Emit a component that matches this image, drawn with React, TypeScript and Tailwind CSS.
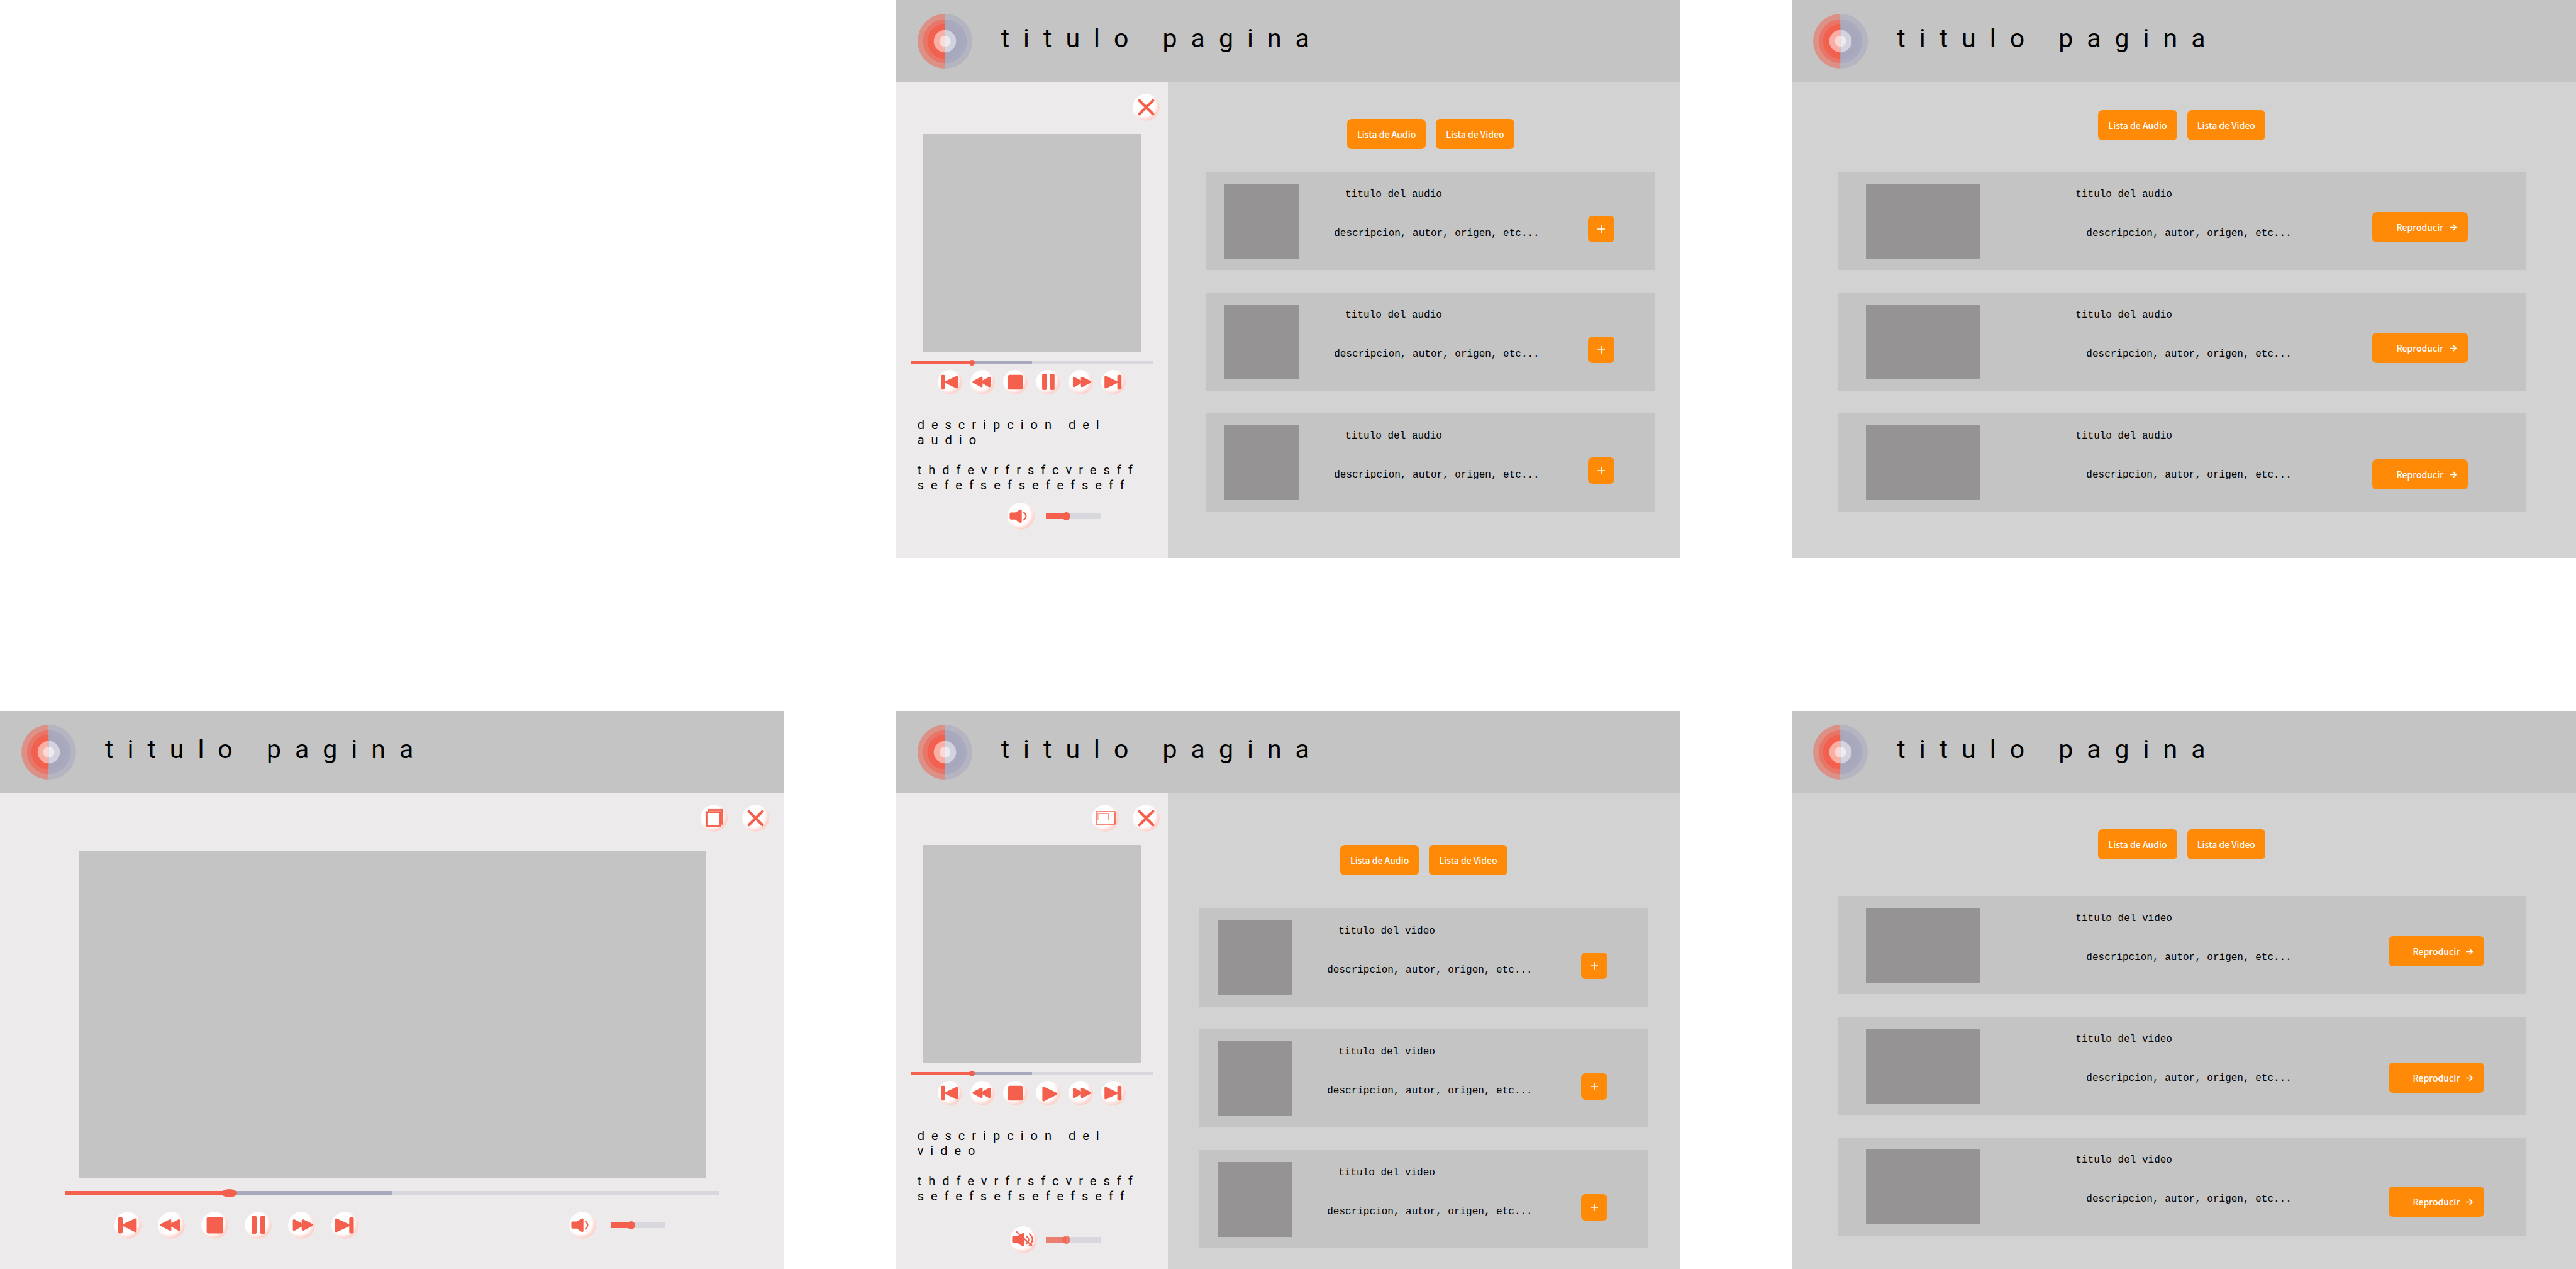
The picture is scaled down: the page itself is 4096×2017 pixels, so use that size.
import type { ReactNode } from "react";

const RED = "#f4604d";

/* ---------- Icons ---------- */

function Glyph({ size, children }: { size: number; children: ReactNode }) {
  return (
    <svg viewBox={`0 0 ${size} ${size}`} className="block size-full" fill="none" aria-hidden="true">
      {children}
    </svg>
  );
}

const solid = { fill: RED, stroke: RED, strokeWidth: 4, strokeLinejoin: "round" as const };

const PreviousIcon = () => (
  <Glyph size={45}>
    <rect x="6" y="9" width="7.6" height="27" rx="2.6" fill={RED} />
    <path d="M15.4 22.3 35 13v19z" {...solid} />
  </Glyph>
);

const RewindIcon = () => (
  <Glyph size={45}>
    <path d="M5.8 22 20.4 14.6v15z" {...solid} />
    <path d="M21.5 22 35 14.6v15z" {...solid} />
  </Glyph>
);

const StopIcon = () => (
  <Glyph size={45}>
    <rect x="9" y="9" width="27" height="27" rx="3" fill={RED} />
  </Glyph>
);

const PauseIcon = () => (
  <Glyph size={45}>
    <rect x="11.6" y="7" width="8.4" height="30" rx="2.6" fill={RED} />
    <rect x="26" y="7" width="8.4" height="30" rx="2.6" fill={RED} />
  </Glyph>
);

const PlayIcon = () => (
  <Glyph size={45}>
    <path d="M14 12.4v23.2L37.6 23.6z" {...solid} />
  </Glyph>
);

const ForwardIcon = () => (
  <Glyph size={45}>
    <path d="M10 14.6v15L23.6 22z" {...solid} />
    <path d="M24.7 14.6v15L39.6 22z" {...solid} />
  </Glyph>
);

const NextIcon = () => (
  <Glyph size={45}>
    <rect x="29.6" y="9" width="7.6" height="27" rx="2.6" fill={RED} />
    <path d="M8 13v19l20.4-9.5z" {...solid} />
  </Glyph>
);

const SPEAKER = "M6 20h8.6L24.4 14.4v21L14.6 29H6z";

const VolumeIcon = () => (
  <Glyph size={50}>
    <path d={SPEAKER} {...solid} />
    <path d="M30 17.8q8.6 6.6 0 14" stroke={RED} strokeWidth="2.4" strokeLinecap="round" />
  </Glyph>
);

const MutedIcon = () => (
  <Glyph size={50}>
    <path d={SPEAKER} {...solid} />
    <path
      d="M30 18.2q8.8 6.4 0 14M35.8 14.4q11.4 9.4 0 21.4M12.4 10.6 40 35.6"
      stroke={RED}
      strokeWidth="2.6"
      strokeLinecap="round"
    />
  </Glyph>
);

const CloseIcon = () => (
  <Glyph size={50}>
    <path d="M12.4 12.4l25.2 25.2M37.6 12.4 12.4 37.6" stroke={RED} strokeWidth="5" strokeLinecap="round" />
  </Glyph>
);

const MiniScreenIcon = () => (
  <Glyph size={50}>
    <rect x="8" y="13" width="35" height="23" rx="0.6" stroke={RED} strokeWidth="2" />
    <rect x="11.5" y="16.5" width="19" height="12" stroke={RED} />
  </Glyph>
);

const WindowsIcon = () => (
  <Glyph size={50}>
    <rect x="15" y="9.8" width="25" height="25.4" fill="#f9aca2" stroke="#f6796a" strokeWidth="3.6" />
    <rect x="15" y="9.8" width="25" height="25.4" stroke={RED} strokeWidth="2" />
    <rect x="11" y="13.8" width="25.2" height="25.2" fill="#fefefe" stroke="#f6796a" strokeWidth="3.6" />
    <rect x="11" y="13.8" width="25.2" height="25.2" stroke={RED} strokeWidth="2" />
  </Glyph>
);

const ArrowIcon = () => (
  <svg viewBox="0 0 12 12" className="size-[11px]" fill="none" aria-hidden="true">
    <path d="M0 6h11M6 .8 11 6 6 11.2" stroke="#fff" strokeWidth="1.9" />
  </svg>
);

const PlusIcon = () => (
  <svg viewBox="0 0 12 12" className="size-3" fill="none" aria-hidden="true">
    <path d="M0 6h12M6 0v12" stroke="#fff" strokeWidth="1.7" />
  </svg>
);

function Logo() {
  const rings = [
    { r: 50, left: "#dc9187", right: "#b5b5c1" },
    { r: 40, left: "#e87568", right: "#a9a9bf" },
    { r: 32, left: "#f0624f", right: "#a8a8bd" },
    { r: 26, left: "#f4604d", right: "#a7a7be" },
    { r: 20.5, left: "#faafa6", right: "#d3d3df" },
    { r: 10.2, left: "#fcd9d4", right: "#ebebf0" },
  ];
  return (
    <svg viewBox="0 0 100 100" className="size-[87px] shrink-0" role="img" aria-label="Logo">
      {rings.map(({ r, left, right }) => (
        <g key={r}>
          <path d={`M50 ${50 - r}a${r} ${r} 0 0 0 0 ${2 * r}z`} fill={left} />
          <path d={`M50 ${50 - r}a${r} ${r} 0 0 1 0 ${2 * r}z`} fill={right} />
        </g>
      ))}
    </svg>
  );
}

/* ---------- Controls ---------- */

function RoundButton({ label, small, children }: { label: string; small?: boolean; children: ReactNode }) {
  return (
    <button
      type="button"
      aria-label={label}
      className={`shrink-0 rounded-full bg-[#fefefe] shadow-[inset_-4px_-4px_4px_#fbd3cd] ${
        small ? "size-[39px]" : "size-[43px]"
      }`}
    >
      {children}
    </button>
  );
}

function Transport({ playing, small }: { playing: boolean; small?: boolean }) {
  return (
    <div className={`flex ${small ? "gap-[13px]" : "gap-[26px]"}`}>
      <RoundButton label="Anterior" small={small}><PreviousIcon /></RoundButton>
      <RoundButton label="Retroceder" small={small}><RewindIcon /></RoundButton>
      <RoundButton label="Detener" small={small}><StopIcon /></RoundButton>
      {playing ? (
        <RoundButton label="Pausar" small={small}><PauseIcon /></RoundButton>
      ) : (
        <RoundButton label="Continuar" small={small}><PlayIcon /></RoundButton>
      )}
      <RoundButton label="Adelantar" small={small}><ForwardIcon /></RoundButton>
      <RoundButton label="Siguiente" small={small}><NextIcon /></RoundButton>
    </div>
  );
}

const SLIDER =
  "block appearance-none bg-transparent [&::-webkit-slider-thumb]:appearance-none [&::-webkit-slider-thumb]:rounded-[50%] [&::-webkit-slider-thumb]:bg-[#f4604d]";

const PROGRESS_TRACK =
  "w-full [&::-webkit-slider-runnable-track]:bg-[linear-gradient(to_right,#f4604d_25%,#a8a8bf_25%,#a8a8bf_50%,#d8d7de_50%)]";

function Progress({ wide }: { wide?: boolean }) {
  return (
    <input
      type="range"
      aria-label="Progreso"
      step={0.1}
      defaultValue={24.5}
      className={`${SLIDER} ${PROGRESS_TRACK} ${
        wide
          ? "h-[13px] [&::-webkit-slider-runnable-track]:h-[7px] [&::-webkit-slider-thumb]:mt-[-3px] [&::-webkit-slider-thumb]:h-[13px] [&::-webkit-slider-thumb]:w-[25px]"
          : "h-[9px] [&::-webkit-slider-runnable-track]:h-[5px] [&::-webkit-slider-thumb]:mt-[-2px] [&::-webkit-slider-thumb]:size-[9px]"
      }`}
    />
  );
}

function VolumeSlider({ muted }: { muted?: boolean }) {
  return (
    <input
      type="range"
      aria-label="Volumen"
      defaultValue={35}
      className={`${SLIDER} h-[13px] w-[87px] [&::-webkit-slider-runnable-track]:h-[9px] [&::-webkit-slider-thumb]:mt-[-2px] [&::-webkit-slider-thumb]:size-[13px] ${
        muted
          ? "[&::-webkit-slider-runnable-track]:bg-[linear-gradient(to_right,#eb7e71_37%,#d8d7de_37%)] [&::-webkit-slider-thumb]:opacity-80"
          : "[&::-webkit-slider-runnable-track]:bg-[linear-gradient(to_right,#f4604d_37%,#d8d7de_37%)]"
      }`}
    />
  );
}

/* ---------- Page parts ---------- */

function Screen({ className = "", children }: { className?: string; children: ReactNode }) {
  return (
    <section className={`flex flex-col bg-[#d2d2d2] ${className}`}>
      <header className="flex h-[130px] shrink-0 items-center bg-[#c4c4c4] pl-[34px]">
        <Logo />
        <h1 className="ml-[46px] pb-2 font-[Roboto,sans-serif] text-[41px] leading-[48px] tracking-[22px] text-black">
          titulo pagina
        </h1>
      </header>
      <div className="flex flex-1">{children}</div>
    </section>
  );
}

function PlayerPanel({ kind }: { kind: "audio" | "video" }) {
  const video = kind === "video";
  return (
    <aside className="w-[34.7%] shrink-0 bg-[#eceaeb] pt-[19px]">
      <div className="flex justify-end gap-[22px] pr-[13px]">
        {video && <RoundButton label="Pantalla completa"><MiniScreenIcon /></RoundButton>}
        <RoundButton label="Cerrar"><CloseIcon /></RoundButton>
      </div>
      <div className="mt-[21px] px-[43px]">
        <div className="aspect-square bg-[#c4c4c4]" />
      </div>
      <div className="mt-3 px-6">
        <Progress />
      </div>
      <div className="mt-[7px] flex justify-center">
        <Transport playing={!video} small />
      </div>
      <div className="mt-9 pl-[34px] font-[Roboto,sans-serif] text-xl leading-6 tracking-[11px] text-black">
        <p>
          descripcion del
          <br />
          {kind}
        </p>
        <p className="mt-6">
          thdfevrfrsfcvresff
          <br />
          sefefsefsefefseff
        </p>
      </div>
      {video ? (
        <div className="mt-9 flex items-center gap-[14px] pl-[181px]">
          <RoundButton label="Activar sonido"><MutedIcon /></RoundButton>
          <VolumeSlider muted />
        </div>
      ) : (
        <div className="mt-4 flex items-center gap-[18px] pl-[177px]">
          <RoundButton label="Silenciar"><VolumeIcon /></RoundButton>
          <VolumeSlider />
        </div>
      )}
    </aside>
  );
}

const TAB =
  "h-12 rounded-[7px] bg-[#ff8a08] px-4 font-['Noto_Sans_CJK_SC',sans-serif] text-sm font-medium text-white";

function ListTabs() {
  return (
    <nav className="flex justify-center gap-4">
      <button type="button" className={TAB}>Lista de Audio</button>
      <button type="button" className={TAB}>Lista de Video</button>
    </nav>
  );
}

function CompactCard({ kind }: { kind: string }) {
  return (
    <li className="flex h-[156px] items-start bg-[#c4c4c4] pt-[19px] pr-[65px] pl-[30px]">
      <div className="size-[119px] shrink-0 bg-[#969394]" />
      <div className="ml-[55px] pt-[7px] font-['Liberation_Mono',monospace] text-base leading-5 text-black">
        <h2 className="pl-[18px]">titulo del {kind}</h2>
        <p className="mt-[42px]">descripcion, autor, origen, etc...</p>
      </div>
      <button
        type="button"
        aria-label="Agregar"
        className="mt-[51px] ml-auto flex size-[42px] items-center justify-center rounded-[7px] bg-[#ff8a08]"
      >
        <PlusIcon />
      </button>
    </li>
  );
}

function WideCard({ kind, action }: { kind: string; action: string }) {
  return (
    <li className="flex h-[156px] items-start bg-[#c4c4c4] pt-[19px] pl-[45px]">
      <div className="h-[119px] w-[182px] shrink-0 bg-[#969394]" />
      <div className="ml-[151px] pt-[7px] font-['Liberation_Mono',monospace] text-base leading-5 text-black">
        <h2>titulo del {kind}</h2>
        <p className="mt-[42px] pl-[17px]">descripcion, autor, origen, etc...</p>
      </div>
      <button
        type="button"
        className={`ml-auto flex h-12 w-[152px] items-center justify-end gap-[10px] rounded-[7px] bg-[#ff8a08] pr-[18px] font-['Noto_Sans_CJK_SC',sans-serif] text-sm font-medium text-white ${action}`}
      >
        Reproducir
        <ArrowIcon />
      </button>
    </li>
  );
}

const ROWS = [0, 1, 2];

export default function App() {
  return (
    <main className="grid min-h-screen grid-cols-3 grid-rows-2 gap-x-[178px] gap-y-[243px] bg-white">
      <Screen className="col-start-2">
        <PlayerPanel kind="audio" />
        <div className="flex-1 pt-[59px] pr-[39px] pl-[60px]">
          <ListTabs />
          <ul className="mt-9 space-y-9">
            {ROWS.map((row) => <CompactCard key={row} kind="audio" />)}
          </ul>
        </div>
      </Screen>

      <Screen>
        <div className="flex-1 pt-[45px] pr-[80px] pl-[73px]">
          <ListTabs />
          <ul className="mt-[50px] space-y-9">
            <WideCard kind="audio" action="mt-[45px] mr-[92px]" />
            <WideCard kind="audio" action="mt-[45px] mr-[92px]" />
            <WideCard kind="audio" action="mt-[54px] mr-[92px]" />
          </ul>
        </div>
      </Screen>

      <Screen>
        <div className="flex-1 bg-[#eceaeb] pt-[19px]">
          <div className="flex justify-end gap-[23px] pr-6">
            <RoundButton label="Minimizar"><WindowsIcon /></RoundButton>
            <RoundButton label="Cerrar"><CloseIcon /></RoundButton>
          </div>
          <div className="mt-[31px] px-[10%]">
            <div className="aspect-[48/25] bg-[#c4c4c4]" />
          </div>
          <div className="mt-[18px] px-[104px]">
            <Progress wide />
          </div>
          <div className="mt-[23px] flex items-center justify-between pr-[189px] pl-[182px]">
            <Transport playing />
            <div className="flex items-center gap-[23px]">
              <RoundButton label="Silenciar"><VolumeIcon /></RoundButton>
              <VolumeSlider />
            </div>
          </div>
        </div>
      </Screen>

      <Screen>
        <PlayerPanel kind="video" />
        <div className="flex-1 pt-[83px] pr-[50px] pl-[49px]">
          <ListTabs />
          <ul className="mt-[53px] space-y-9">
            {ROWS.map((row) => <CompactCard key={row} kind="video" />)}
          </ul>
        </div>
      </Screen>

      <Screen>
        <div className="flex-1 pt-[58px] pr-[80px] pl-[73px]">
          <ListTabs />
          <ul className="mt-[58px] space-y-9">
            <WideCard kind="video" action="mt-[45px] mr-[66px]" />
            <WideCard kind="video" action="mt-[54px] mr-[66px]" />
            <WideCard kind="video" action="mt-[59px] mr-[66px]" />
          </ul>
        </div>
      </Screen>
    </main>
  );
}
